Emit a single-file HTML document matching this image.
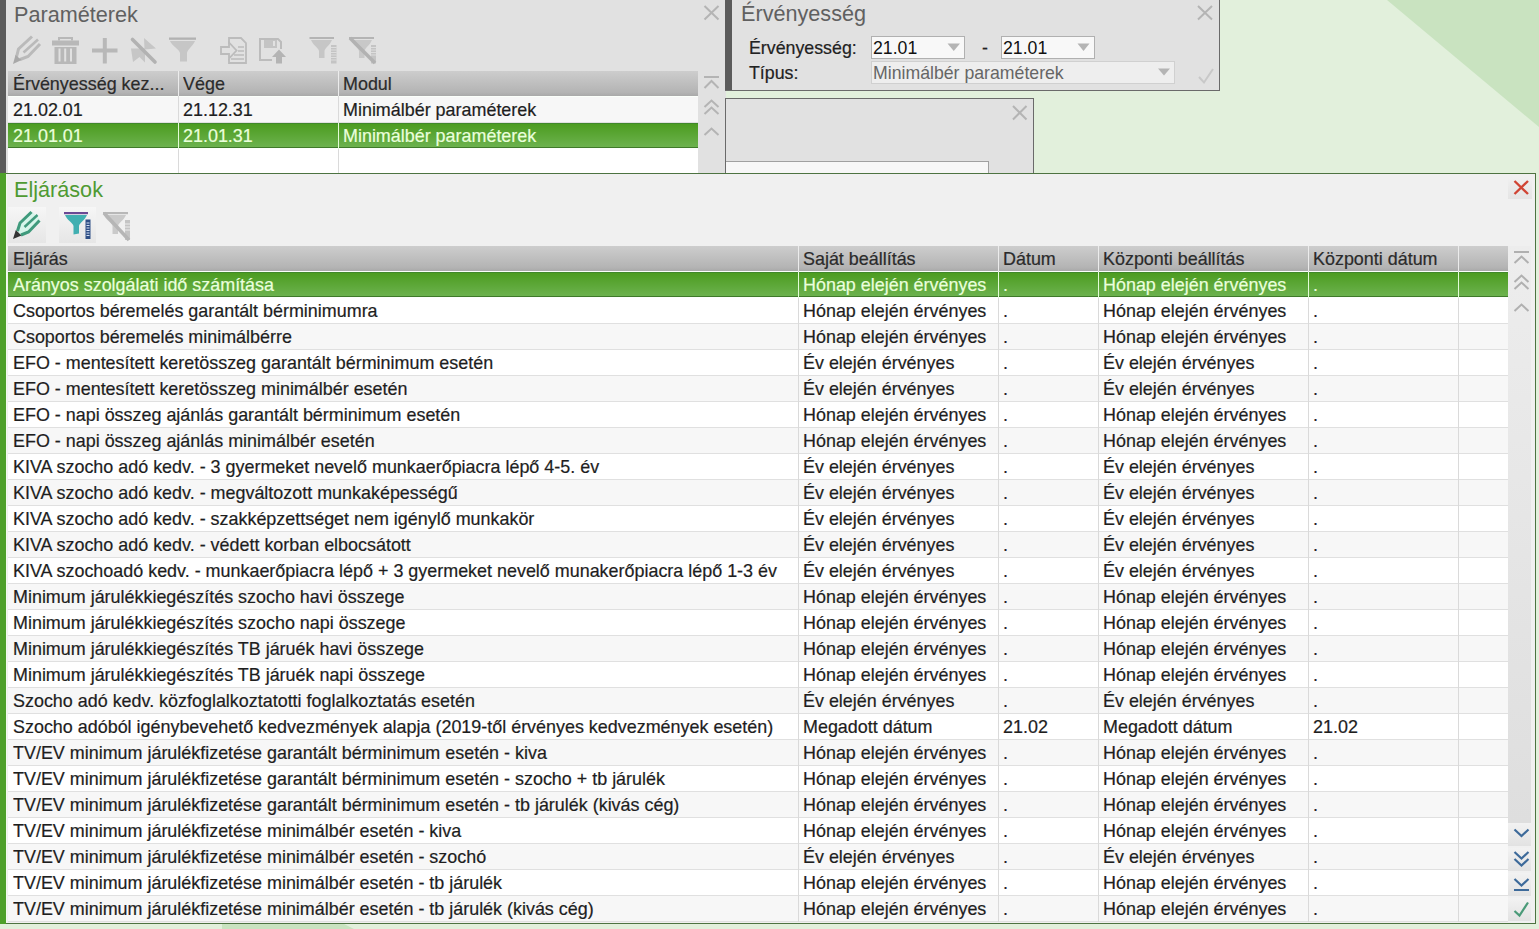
<!DOCTYPE html>
<html><head><meta charset="utf-8">
<style>
*{box-sizing:border-box;margin:0;padding:0}
html,body{width:1539px;height:929px;overflow:hidden}
body{background:#e2f0dc;font-family:"Liberation Sans",sans-serif;position:relative;color:#222}
.abs,.hdr,.ht,.rw,.ct,.cl,.title,.lbl,.inp{position:absolute}
.title{font-size:21px;color:#606060;white-space:nowrap;line-height:26px;transform:scale(1.03,1.07);transform-origin:0 20px}
.title.green{color:#4f9a32}
.hdr{background:linear-gradient(#cdcdcd,#b4b4b4 85%,#a9a9a9)}
.ht{font-size:17.93px;color:#2b2b2b;-webkit-text-stroke:0.2px #2b2b2b;white-space:nowrap;overflow:hidden}
.rw{border-bottom:1px solid #e0e0e0}
.rw.odd{background:#f7f7f7}
.rw.even{background:#ffffff}
.rw.sel{background:linear-gradient(#4c9c20,#6cb24e);border-top:1px solid #40882a;border-bottom:1px solid #3f7a2a}
.ct{font-size:17.93px;color:#1e1e1e;-webkit-text-stroke:0.2px #1e1e1e;white-space:nowrap;overflow:hidden}
.ct.st{color:#eaffdc;-webkit-text-stroke:0.2px #eaffdc}
.cl{width:1px;background:#dadada}
.lbl{font-size:17.8px;color:#222;-webkit-text-stroke:0.2px #222;white-space:nowrap;line-height:24px}
.inp{font-size:17.7px;color:#111;background:#f8f8f8;border:1px solid #b0b0b0;padding-left:1px;line-height:23px;white-space:nowrap}
.inp.sel2{background:#eeeeee;color:#666;border-color:#d0d0d0}

</style></head>
<body>
<svg class="abs" style="left:0;top:0" width="1539" height="929"><polygon points="1387,0 1539,0 1539,127" fill="#c9e3c0"/><polygon points="222,923 342,923 354,929 222,929" fill="#c9e3c0"/></svg>

<!-- top panel -->
<div class="abs" style="left:0;top:0;width:726px;height:173px;background:#e1e1e1"></div>
<div class="abs" style="left:0;top:0;width:6px;height:173px;background:#5b5b5b"></div>
<div class="title" style="left:14px;top:2px">Paraméterek</div>
<div class="hdr" style="left:8px;top:71px;width:690px;height:25px"></div>
<div class="ht" style="left:13px;top:72px;width:165px;height:25px;line-height:25px">Érvényesség kez...</div>
<div class="ht" style="left:183px;top:72px;width:155px;height:25px;line-height:25px">Vége</div>
<div class="ht" style="left:343px;top:72px;width:355px;height:25px;line-height:25px">Modul</div>
<div class="abs" style="left:8px;top:96px;width:690px;height:79px;background:#fbfffa"></div>
<div class="rw odd" style="left:8px;top:97px;width:690px;height:26px"></div>
<div class="ct " style="left:13px;top:97px;width:165px;height:26px;line-height:26px">21.02.01</div>
<div class="ct " style="left:183px;top:97px;width:155px;height:26px;line-height:26px">21.12.31</div>
<div class="ct " style="left:343px;top:97px;width:355px;height:26px;line-height:26px">Minimálbér paraméterek</div>
<div class="rw sel" style="left:8px;top:123px;width:690px;height:25px"></div>
<div class="ct st" style="left:13px;top:123px;width:165px;height:26px;line-height:26px">21.01.01</div>
<div class="ct st" style="left:183px;top:123px;width:155px;height:26px;line-height:26px">21.01.31</div>
<div class="ct st" style="left:343px;top:123px;width:355px;height:26px;line-height:26px">Minimálbér paraméterek</div>
<div class="rw even" style="left:8px;top:149px;width:690px;height:26px"></div>
<div class="cl" style="left:178px;top:71px;height:104px"></div>
<div class="abs" style="left:178px;top:71px;width:1px;height:25px;background:#ececec"></div>
<div class="abs" style="left:178px;top:123px;width:1px;height:26px;background:#e4fcd8"></div>
<div class="cl" style="left:338px;top:71px;height:104px"></div>
<div class="abs" style="left:338px;top:71px;width:1px;height:25px;background:#ececec"></div>
<div class="abs" style="left:338px;top:123px;width:1px;height:26px;background:#e4fcd8"></div>

<!-- validity panel -->
<div class="abs" style="left:725px;top:0;width:495px;height:91px;background:#e1e1e1;border-right:1px solid #6a6a6a;border-bottom:1px solid #6a6a6a"></div>
<div class="abs" style="left:725px;top:0;width:7px;height:90px;background:#5b5b5b"></div>
<div class="title" style="left:741px;top:1px">Érvényesség</div>
<div class="lbl" style="left:749px;top:36px">Érvényesség:</div>
<div class="lbl" style="left:749px;top:61px">Típus:</div>
<div class="inp" style="left:871px;top:36px;width:94px;height:23px">21.01</div>
<div class="lbl" style="left:982px;top:36px">-</div>
<div class="inp" style="left:1001px;top:36px;width:94px;height:23px">21.01</div>
<div class="inp sel2" style="left:871px;top:61px;width:304px;height:23px">Minimálbér paraméterek</div>

<!-- small panel -->
<div class="abs" style="left:725px;top:98px;width:309px;height:76px;background:#e1e1e1;border:1px solid #6a6a6a;border-bottom:none"></div>
<div class="abs" style="left:726px;top:161px;width:263px;height:12px;background:#f7f7f7;border-top:1px solid #a0a0a0;border-right:1px solid #a0a0a0"></div>

<!-- bottom panel -->
<div class="abs" style="left:0;top:173px;width:1536px;height:751px;background:#f0f0f0;border:1px solid #4d7341;border-left:none"></div><div class="abs" style="left:6px;top:174px;width:1px;height:749px;background:#f2fbee"></div>
<div class="abs" style="left:0;top:173px;width:6px;height:751px;background:#4ea02a"></div>
<div class="title green" style="left:14px;top:177px">Eljárások</div>
<div class="abs" style="left:1508px;top:246px;width:23px;height:577px;background:linear-gradient(#ededed,#dedede)"></div>
<div class="hdr" style="left:8px;top:246px;width:1500px;height:25px"></div>
<div class="ht" style="left:13px;top:247px;width:785px;height:25px;line-height:25px">Eljárás</div>
<div class="ht" style="left:803px;top:247px;width:195px;height:25px;line-height:25px">Saját beállítás</div>
<div class="ht" style="left:1003px;top:247px;width:95px;height:25px;line-height:25px">Dátum</div>
<div class="ht" style="left:1103px;top:247px;width:205px;height:25px;line-height:25px">Központi beállítás</div>
<div class="ht" style="left:1313px;top:247px;width:145px;height:25px;line-height:25px">Központi dátum</div>
<div class="ht" style="left:1463px;top:247px;width:45px;height:25px;line-height:25px"></div>
<div class="abs" style="left:8px;top:271px;width:1500px;height:651px;background:#fbfffa"></div>
<div class="rw sel" style="left:8px;top:272px;width:1500px;height:25px"></div>
<div class="ct st" style="left:13px;top:272px;width:785px;height:26px;line-height:26px">Arányos szolgálati idő számítása</div>
<div class="ct st" style="left:803px;top:272px;width:195px;height:26px;line-height:26px">Hónap elején érvényes</div>
<div class="ct st" style="left:1003px;top:272px;width:95px;height:26px;line-height:26px">.</div>
<div class="ct st" style="left:1103px;top:272px;width:205px;height:26px;line-height:26px">Hónap elején érvényes</div>
<div class="ct st" style="left:1313px;top:272px;width:145px;height:26px;line-height:26px">.</div>
<div class="ct st" style="left:1463px;top:272px;width:45px;height:26px;line-height:26px"></div>
<div class="rw even" style="left:8px;top:298px;width:1500px;height:26px"></div>
<div class="ct " style="left:13px;top:298px;width:785px;height:26px;line-height:26px">Csoportos béremelés garantált bérminimumra</div>
<div class="ct " style="left:803px;top:298px;width:195px;height:26px;line-height:26px">Hónap elején érvényes</div>
<div class="ct " style="left:1003px;top:298px;width:95px;height:26px;line-height:26px">.</div>
<div class="ct " style="left:1103px;top:298px;width:205px;height:26px;line-height:26px">Hónap elején érvényes</div>
<div class="ct " style="left:1313px;top:298px;width:145px;height:26px;line-height:26px">.</div>
<div class="ct " style="left:1463px;top:298px;width:45px;height:26px;line-height:26px"></div>
<div class="rw odd" style="left:8px;top:324px;width:1500px;height:26px"></div>
<div class="ct " style="left:13px;top:324px;width:785px;height:26px;line-height:26px">Csoportos béremelés minimálbérre</div>
<div class="ct " style="left:803px;top:324px;width:195px;height:26px;line-height:26px">Hónap elején érvényes</div>
<div class="ct " style="left:1003px;top:324px;width:95px;height:26px;line-height:26px">.</div>
<div class="ct " style="left:1103px;top:324px;width:205px;height:26px;line-height:26px">Hónap elején érvényes</div>
<div class="ct " style="left:1313px;top:324px;width:145px;height:26px;line-height:26px">.</div>
<div class="ct " style="left:1463px;top:324px;width:45px;height:26px;line-height:26px"></div>
<div class="rw even" style="left:8px;top:350px;width:1500px;height:26px"></div>
<div class="ct " style="left:13px;top:350px;width:785px;height:26px;line-height:26px">EFO - mentesített keretösszeg garantált bérminimum esetén</div>
<div class="ct " style="left:803px;top:350px;width:195px;height:26px;line-height:26px">Év elején érvényes</div>
<div class="ct " style="left:1003px;top:350px;width:95px;height:26px;line-height:26px">.</div>
<div class="ct " style="left:1103px;top:350px;width:205px;height:26px;line-height:26px">Év elején érvényes</div>
<div class="ct " style="left:1313px;top:350px;width:145px;height:26px;line-height:26px">.</div>
<div class="ct " style="left:1463px;top:350px;width:45px;height:26px;line-height:26px"></div>
<div class="rw odd" style="left:8px;top:376px;width:1500px;height:26px"></div>
<div class="ct " style="left:13px;top:376px;width:785px;height:26px;line-height:26px">EFO - mentesített keretösszeg minimálbér esetén</div>
<div class="ct " style="left:803px;top:376px;width:195px;height:26px;line-height:26px">Év elején érvényes</div>
<div class="ct " style="left:1003px;top:376px;width:95px;height:26px;line-height:26px">.</div>
<div class="ct " style="left:1103px;top:376px;width:205px;height:26px;line-height:26px">Év elején érvényes</div>
<div class="ct " style="left:1313px;top:376px;width:145px;height:26px;line-height:26px">.</div>
<div class="ct " style="left:1463px;top:376px;width:45px;height:26px;line-height:26px"></div>
<div class="rw even" style="left:8px;top:402px;width:1500px;height:26px"></div>
<div class="ct " style="left:13px;top:402px;width:785px;height:26px;line-height:26px">EFO - napi összeg ajánlás garantált bérminimum esetén</div>
<div class="ct " style="left:803px;top:402px;width:195px;height:26px;line-height:26px">Hónap elején érvényes</div>
<div class="ct " style="left:1003px;top:402px;width:95px;height:26px;line-height:26px">.</div>
<div class="ct " style="left:1103px;top:402px;width:205px;height:26px;line-height:26px">Hónap elején érvényes</div>
<div class="ct " style="left:1313px;top:402px;width:145px;height:26px;line-height:26px">.</div>
<div class="ct " style="left:1463px;top:402px;width:45px;height:26px;line-height:26px"></div>
<div class="rw odd" style="left:8px;top:428px;width:1500px;height:26px"></div>
<div class="ct " style="left:13px;top:428px;width:785px;height:26px;line-height:26px">EFO - napi összeg ajánlás minimálbér esetén</div>
<div class="ct " style="left:803px;top:428px;width:195px;height:26px;line-height:26px">Hónap elején érvényes</div>
<div class="ct " style="left:1003px;top:428px;width:95px;height:26px;line-height:26px">.</div>
<div class="ct " style="left:1103px;top:428px;width:205px;height:26px;line-height:26px">Hónap elején érvényes</div>
<div class="ct " style="left:1313px;top:428px;width:145px;height:26px;line-height:26px">.</div>
<div class="ct " style="left:1463px;top:428px;width:45px;height:26px;line-height:26px"></div>
<div class="rw even" style="left:8px;top:454px;width:1500px;height:26px"></div>
<div class="ct " style="left:13px;top:454px;width:785px;height:26px;line-height:26px">KIVA szocho adó kedv. - 3 gyermeket nevelő munkaerőpiacra lépő 4-5. év</div>
<div class="ct " style="left:803px;top:454px;width:195px;height:26px;line-height:26px">Év elején érvényes</div>
<div class="ct " style="left:1003px;top:454px;width:95px;height:26px;line-height:26px">.</div>
<div class="ct " style="left:1103px;top:454px;width:205px;height:26px;line-height:26px">Év elején érvényes</div>
<div class="ct " style="left:1313px;top:454px;width:145px;height:26px;line-height:26px">.</div>
<div class="ct " style="left:1463px;top:454px;width:45px;height:26px;line-height:26px"></div>
<div class="rw odd" style="left:8px;top:480px;width:1500px;height:26px"></div>
<div class="ct " style="left:13px;top:480px;width:785px;height:26px;line-height:26px">KIVA szocho adó kedv. - megváltozott munkaképességű</div>
<div class="ct " style="left:803px;top:480px;width:195px;height:26px;line-height:26px">Év elején érvényes</div>
<div class="ct " style="left:1003px;top:480px;width:95px;height:26px;line-height:26px">.</div>
<div class="ct " style="left:1103px;top:480px;width:205px;height:26px;line-height:26px">Év elején érvényes</div>
<div class="ct " style="left:1313px;top:480px;width:145px;height:26px;line-height:26px">.</div>
<div class="ct " style="left:1463px;top:480px;width:45px;height:26px;line-height:26px"></div>
<div class="rw even" style="left:8px;top:506px;width:1500px;height:26px"></div>
<div class="ct " style="left:13px;top:506px;width:785px;height:26px;line-height:26px">KIVA szocho adó kedv. - szakképzettséget nem igénylő munkakör</div>
<div class="ct " style="left:803px;top:506px;width:195px;height:26px;line-height:26px">Év elején érvényes</div>
<div class="ct " style="left:1003px;top:506px;width:95px;height:26px;line-height:26px">.</div>
<div class="ct " style="left:1103px;top:506px;width:205px;height:26px;line-height:26px">Év elején érvényes</div>
<div class="ct " style="left:1313px;top:506px;width:145px;height:26px;line-height:26px">.</div>
<div class="ct " style="left:1463px;top:506px;width:45px;height:26px;line-height:26px"></div>
<div class="rw odd" style="left:8px;top:532px;width:1500px;height:26px"></div>
<div class="ct " style="left:13px;top:532px;width:785px;height:26px;line-height:26px">KIVA szocho adó kedv. - védett korban elbocsátott</div>
<div class="ct " style="left:803px;top:532px;width:195px;height:26px;line-height:26px">Év elején érvényes</div>
<div class="ct " style="left:1003px;top:532px;width:95px;height:26px;line-height:26px">.</div>
<div class="ct " style="left:1103px;top:532px;width:205px;height:26px;line-height:26px">Év elején érvényes</div>
<div class="ct " style="left:1313px;top:532px;width:145px;height:26px;line-height:26px">.</div>
<div class="ct " style="left:1463px;top:532px;width:45px;height:26px;line-height:26px"></div>
<div class="rw even" style="left:8px;top:558px;width:1500px;height:26px"></div>
<div class="ct " style="left:13px;top:558px;width:785px;height:26px;line-height:26px">KIVA szochoadó kedv. - munkaerőpiacra lépő + 3 gyermeket nevelő munakerőpiacra lépő 1-3 év</div>
<div class="ct " style="left:803px;top:558px;width:195px;height:26px;line-height:26px">Év elején érvényes</div>
<div class="ct " style="left:1003px;top:558px;width:95px;height:26px;line-height:26px">.</div>
<div class="ct " style="left:1103px;top:558px;width:205px;height:26px;line-height:26px">Év elején érvényes</div>
<div class="ct " style="left:1313px;top:558px;width:145px;height:26px;line-height:26px">.</div>
<div class="ct " style="left:1463px;top:558px;width:45px;height:26px;line-height:26px"></div>
<div class="rw odd" style="left:8px;top:584px;width:1500px;height:26px"></div>
<div class="ct " style="left:13px;top:584px;width:785px;height:26px;line-height:26px">Minimum járulékkiegészítés szocho havi összege</div>
<div class="ct " style="left:803px;top:584px;width:195px;height:26px;line-height:26px">Hónap elején érvényes</div>
<div class="ct " style="left:1003px;top:584px;width:95px;height:26px;line-height:26px">.</div>
<div class="ct " style="left:1103px;top:584px;width:205px;height:26px;line-height:26px">Hónap elején érvényes</div>
<div class="ct " style="left:1313px;top:584px;width:145px;height:26px;line-height:26px">.</div>
<div class="ct " style="left:1463px;top:584px;width:45px;height:26px;line-height:26px"></div>
<div class="rw even" style="left:8px;top:610px;width:1500px;height:26px"></div>
<div class="ct " style="left:13px;top:610px;width:785px;height:26px;line-height:26px">Minimum járulékkiegészítés szocho napi összege</div>
<div class="ct " style="left:803px;top:610px;width:195px;height:26px;line-height:26px">Hónap elején érvényes</div>
<div class="ct " style="left:1003px;top:610px;width:95px;height:26px;line-height:26px">.</div>
<div class="ct " style="left:1103px;top:610px;width:205px;height:26px;line-height:26px">Hónap elején érvényes</div>
<div class="ct " style="left:1313px;top:610px;width:145px;height:26px;line-height:26px">.</div>
<div class="ct " style="left:1463px;top:610px;width:45px;height:26px;line-height:26px"></div>
<div class="rw odd" style="left:8px;top:636px;width:1500px;height:26px"></div>
<div class="ct " style="left:13px;top:636px;width:785px;height:26px;line-height:26px">Minimum járulékkiegészítés TB járuék havi összege</div>
<div class="ct " style="left:803px;top:636px;width:195px;height:26px;line-height:26px">Hónap elején érvényes</div>
<div class="ct " style="left:1003px;top:636px;width:95px;height:26px;line-height:26px">.</div>
<div class="ct " style="left:1103px;top:636px;width:205px;height:26px;line-height:26px">Hónap elején érvényes</div>
<div class="ct " style="left:1313px;top:636px;width:145px;height:26px;line-height:26px">.</div>
<div class="ct " style="left:1463px;top:636px;width:45px;height:26px;line-height:26px"></div>
<div class="rw even" style="left:8px;top:662px;width:1500px;height:26px"></div>
<div class="ct " style="left:13px;top:662px;width:785px;height:26px;line-height:26px">Minimum járulékkiegészítés TB járuék napi összege</div>
<div class="ct " style="left:803px;top:662px;width:195px;height:26px;line-height:26px">Hónap elején érvényes</div>
<div class="ct " style="left:1003px;top:662px;width:95px;height:26px;line-height:26px">.</div>
<div class="ct " style="left:1103px;top:662px;width:205px;height:26px;line-height:26px">Hónap elején érvényes</div>
<div class="ct " style="left:1313px;top:662px;width:145px;height:26px;line-height:26px">.</div>
<div class="ct " style="left:1463px;top:662px;width:45px;height:26px;line-height:26px"></div>
<div class="rw odd" style="left:8px;top:688px;width:1500px;height:26px"></div>
<div class="ct " style="left:13px;top:688px;width:785px;height:26px;line-height:26px">Szocho adó kedv. közfoglalkoztatotti foglalkoztatás esetén</div>
<div class="ct " style="left:803px;top:688px;width:195px;height:26px;line-height:26px">Év elején érvényes</div>
<div class="ct " style="left:1003px;top:688px;width:95px;height:26px;line-height:26px">.</div>
<div class="ct " style="left:1103px;top:688px;width:205px;height:26px;line-height:26px">Év elején érvényes</div>
<div class="ct " style="left:1313px;top:688px;width:145px;height:26px;line-height:26px">.</div>
<div class="ct " style="left:1463px;top:688px;width:45px;height:26px;line-height:26px"></div>
<div class="rw even" style="left:8px;top:714px;width:1500px;height:26px"></div>
<div class="ct " style="left:13px;top:714px;width:785px;height:26px;line-height:26px">Szocho adóból igénybevehető kedvezmények alapja (2019-től érvényes kedvezmények esetén)</div>
<div class="ct " style="left:803px;top:714px;width:195px;height:26px;line-height:26px">Megadott dátum</div>
<div class="ct " style="left:1003px;top:714px;width:95px;height:26px;line-height:26px">21.02</div>
<div class="ct " style="left:1103px;top:714px;width:205px;height:26px;line-height:26px">Megadott dátum</div>
<div class="ct " style="left:1313px;top:714px;width:145px;height:26px;line-height:26px">21.02</div>
<div class="ct " style="left:1463px;top:714px;width:45px;height:26px;line-height:26px"></div>
<div class="rw odd" style="left:8px;top:740px;width:1500px;height:26px"></div>
<div class="ct " style="left:13px;top:740px;width:785px;height:26px;line-height:26px">TV/EV minimum járulékfizetése garantált bérminimum esetén - kiva</div>
<div class="ct " style="left:803px;top:740px;width:195px;height:26px;line-height:26px">Hónap elején érvényes</div>
<div class="ct " style="left:1003px;top:740px;width:95px;height:26px;line-height:26px">.</div>
<div class="ct " style="left:1103px;top:740px;width:205px;height:26px;line-height:26px">Hónap elején érvényes</div>
<div class="ct " style="left:1313px;top:740px;width:145px;height:26px;line-height:26px">.</div>
<div class="ct " style="left:1463px;top:740px;width:45px;height:26px;line-height:26px"></div>
<div class="rw even" style="left:8px;top:766px;width:1500px;height:26px"></div>
<div class="ct " style="left:13px;top:766px;width:785px;height:26px;line-height:26px">TV/EV minimum járulékfizetése garantált bérminimum esetén - szocho + tb járulék</div>
<div class="ct " style="left:803px;top:766px;width:195px;height:26px;line-height:26px">Hónap elején érvényes</div>
<div class="ct " style="left:1003px;top:766px;width:95px;height:26px;line-height:26px">.</div>
<div class="ct " style="left:1103px;top:766px;width:205px;height:26px;line-height:26px">Hónap elején érvényes</div>
<div class="ct " style="left:1313px;top:766px;width:145px;height:26px;line-height:26px">.</div>
<div class="ct " style="left:1463px;top:766px;width:45px;height:26px;line-height:26px"></div>
<div class="rw odd" style="left:8px;top:792px;width:1500px;height:26px"></div>
<div class="ct " style="left:13px;top:792px;width:785px;height:26px;line-height:26px">TV/EV minimum járulékfizetése garantált bérminimum esetén - tb járulék (kivás cég)</div>
<div class="ct " style="left:803px;top:792px;width:195px;height:26px;line-height:26px">Hónap elején érvényes</div>
<div class="ct " style="left:1003px;top:792px;width:95px;height:26px;line-height:26px">.</div>
<div class="ct " style="left:1103px;top:792px;width:205px;height:26px;line-height:26px">Hónap elején érvényes</div>
<div class="ct " style="left:1313px;top:792px;width:145px;height:26px;line-height:26px">.</div>
<div class="ct " style="left:1463px;top:792px;width:45px;height:26px;line-height:26px"></div>
<div class="rw even" style="left:8px;top:818px;width:1500px;height:26px"></div>
<div class="ct " style="left:13px;top:818px;width:785px;height:26px;line-height:26px">TV/EV minimum járulékfizetése minimálbér esetén - kiva</div>
<div class="ct " style="left:803px;top:818px;width:195px;height:26px;line-height:26px">Hónap elején érvényes</div>
<div class="ct " style="left:1003px;top:818px;width:95px;height:26px;line-height:26px">.</div>
<div class="ct " style="left:1103px;top:818px;width:205px;height:26px;line-height:26px">Hónap elején érvényes</div>
<div class="ct " style="left:1313px;top:818px;width:145px;height:26px;line-height:26px">.</div>
<div class="ct " style="left:1463px;top:818px;width:45px;height:26px;line-height:26px"></div>
<div class="rw odd" style="left:8px;top:844px;width:1500px;height:26px"></div>
<div class="ct " style="left:13px;top:844px;width:785px;height:26px;line-height:26px">TV/EV minimum járulékfizetése minimálbér esetén - szochó</div>
<div class="ct " style="left:803px;top:844px;width:195px;height:26px;line-height:26px">Év elején érvényes</div>
<div class="ct " style="left:1003px;top:844px;width:95px;height:26px;line-height:26px">.</div>
<div class="ct " style="left:1103px;top:844px;width:205px;height:26px;line-height:26px">Év elején érvényes</div>
<div class="ct " style="left:1313px;top:844px;width:145px;height:26px;line-height:26px">.</div>
<div class="ct " style="left:1463px;top:844px;width:45px;height:26px;line-height:26px"></div>
<div class="rw even" style="left:8px;top:870px;width:1500px;height:26px"></div>
<div class="ct " style="left:13px;top:870px;width:785px;height:26px;line-height:26px">TV/EV minimum járulékfizetése minimálbér esetén - tb járulék</div>
<div class="ct " style="left:803px;top:870px;width:195px;height:26px;line-height:26px">Hónap elején érvényes</div>
<div class="ct " style="left:1003px;top:870px;width:95px;height:26px;line-height:26px">.</div>
<div class="ct " style="left:1103px;top:870px;width:205px;height:26px;line-height:26px">Hónap elején érvényes</div>
<div class="ct " style="left:1313px;top:870px;width:145px;height:26px;line-height:26px">.</div>
<div class="ct " style="left:1463px;top:870px;width:45px;height:26px;line-height:26px"></div>
<div class="rw odd" style="left:8px;top:896px;width:1500px;height:26px"></div>
<div class="ct " style="left:13px;top:896px;width:785px;height:26px;line-height:26px">TV/EV minimum járulékfizetése minimálbér esetén - tb járulék (kivás cég)</div>
<div class="ct " style="left:803px;top:896px;width:195px;height:26px;line-height:26px">Hónap elején érvényes</div>
<div class="ct " style="left:1003px;top:896px;width:95px;height:26px;line-height:26px">.</div>
<div class="ct " style="left:1103px;top:896px;width:205px;height:26px;line-height:26px">Hónap elején érvényes</div>
<div class="ct " style="left:1313px;top:896px;width:145px;height:26px;line-height:26px">.</div>
<div class="ct " style="left:1463px;top:896px;width:45px;height:26px;line-height:26px"></div>
<div class="cl" style="left:798px;top:246px;height:676px"></div>
<div class="abs" style="left:798px;top:246px;width:1px;height:25px;background:#ececec"></div>
<div class="abs" style="left:798px;top:272px;width:1px;height:26px;background:#e4fcd8"></div>
<div class="cl" style="left:998px;top:246px;height:676px"></div>
<div class="abs" style="left:998px;top:246px;width:1px;height:25px;background:#ececec"></div>
<div class="abs" style="left:998px;top:272px;width:1px;height:26px;background:#e4fcd8"></div>
<div class="cl" style="left:1098px;top:246px;height:676px"></div>
<div class="abs" style="left:1098px;top:246px;width:1px;height:25px;background:#ececec"></div>
<div class="abs" style="left:1098px;top:272px;width:1px;height:26px;background:#e4fcd8"></div>
<div class="cl" style="left:1308px;top:246px;height:676px"></div>
<div class="abs" style="left:1308px;top:246px;width:1px;height:25px;background:#ececec"></div>
<div class="abs" style="left:1308px;top:272px;width:1px;height:26px;background:#e4fcd8"></div>
<div class="cl" style="left:1458px;top:246px;height:676px"></div>
<div class="abs" style="left:1458px;top:246px;width:1px;height:25px;background:#ececec"></div>
<div class="abs" style="left:1458px;top:272px;width:1px;height:26px;background:#e4fcd8"></div>

<!-- top toolbar (disabled gray icons) -->
<svg class="abs" style="left:0;top:30px" width="400" height="40" viewBox="0 30 400 40">
 <g fill="none" stroke="#bababa" stroke-width="3" stroke-linecap="butt">
  <!-- pencil -->
  <path d="M16.5 57 L18.5 49 L32 36.5" stroke-width="3"/>
  <path d="M23.5 52.5 L38 39.5" stroke-width="2.6"/>
  <path d="M20 59.5 L28 56.5 L40 44" stroke-width="3"/>
 </g>
 <polygon points="13,64 15.5,55 21.5,60" fill="#a8a8a8"/>
 <!-- trash -->
 <g fill="#b8b8b8">
  <path d="M58 37 h15 v3.5 h-2 v-1.5 h-11 v1.5 h-2 z"/>
  <rect x="52" y="40.5" width="27" height="5"/>
  <path d="M54.5 47 h22 v17 h-22 z M58.5 48.5 v13 h2 v-13 z M64.2 48.5 v13 h2 v-13 z M70 48.5 v13 h2 v-13 z" fill-rule="evenodd"/>
 </g>
 <!-- plus -->
 <g fill="#b8b8b8">
  <rect x="92" y="48.5" width="25.5" height="4"/>
  <rect x="102.8" y="38" width="4" height="25.5"/>
 </g>
 <!-- crossed -->
 <polygon points="144,38 156,48.5 144.5,49.5" fill="#c6c6c6"/>
 <polygon points="131,48.5 145,48.5 145,62.5 139.5,57 133,62" fill="#c6c6c6"/>
 <path d="M132.5 39.5 L155 62" stroke="#b2b2b2" stroke-width="3.6" stroke-linecap="round"/>
 <!-- filter -->
 <rect x="169" y="37.5" width="27" height="2.3" fill="#b2b2b2"/>
 <path d="M170 41 H195 C193 46 187.5 49.5 187 53 V61.5 H180 V53 C179.5 49.5 172 46 170 41 Z" fill="#c6c6c6"/>
 <!-- import doc -->
 <g fill="none" stroke="#bcbcbc" stroke-width="1.8">
  <path d="M229 44 v-6 h12 l5 5 v20 h-17 v-4"/>
  <path d="M221 47 h8 v-4.5 l7.5 8 l-7.5 8 v-4.5 h-8 z"/>
  <path d="M238 47 h6 M238 51 h6 M234 55 h10 M231 59 h13" stroke-width="1.3"/>
 </g>
 <!-- save up -->
 <g fill="none" stroke="#bcbcbc" stroke-width="2">
  <path d="M272 60 h-12 v-21 h18 l3 3 v7"/>
 </g>
 <path d="M264 40 h13 v8 h-13 z M273 41 v5 h2 v-5 z" fill="#c4c4c4" fill-rule="evenodd"/>
 <polygon points="279,49.5 286,57 282,57 282,63.5 276,63.5 276,57 272,57" fill="#b4b4b4"/>
 <!-- filter + bar -->
 <rect x="309.5" y="37" width="24.5" height="2" fill="#b4b4b4"/>
 <path d="M311 40 H332 C330 45 325 48 324.5 51 V58 H319 V51 C318.5 48 313 45 311 40 Z" fill="#c6c6c6"/>
 <rect x="331" y="45" width="5.5" height="18.5" fill="#c4c4c4"/>
 <g stroke="#e4e4e4" stroke-width="0.8"><path d="M331 47.5h5.5M331 50h5.5M331 52.5h5.5M331 55h5.5M331 57.5h5.5M331 60h5.5"/></g>
 <!-- filter crossed -->
 <rect x="349" y="37" width="25" height="2" fill="#b4b4b4"/>
 <path d="M351 40 H372 C370 45 365 48 364.5 51 V58 H359 V51 C358.5 48 353 45 351 40 Z" fill="#c8c8c8"/>
 <rect x="371" y="45" width="5" height="18.5" fill="#c4c4c4"/>
 <g stroke="#e4e4e4" stroke-width="0.8"><path d="M371 47.5h5M371 50h5M371 52.5h5M371 55h5"/></g>
 <path d="M350 38 L375 63" stroke="#b2b2b2" stroke-width="3.5"/>
</svg>

<!-- top panel close and scroll icons -->
<svg class="abs" style="left:698px;top:0" width="28" height="173">
 <g fill="none" stroke="#b4b4b4" stroke-width="2">
  <path d="M6.5 6 L20.5 19.5 M20.5 6 L6.5 19.5"/>
  <path d="M6 77 h15 M6.5 88 L13.5 81 L20.5 88"/>
  <path d="M6.5 107 L13.5 100.5 L20.5 107 M6.5 114 L13.5 107.5 L20.5 114"/>
  <path d="M6.5 135 L13.5 128.5 L20.5 135"/>
 </g>
</svg>

<!-- validity panel icons -->
<svg class="abs" style="left:940px;top:30px" width="290" height="60">
 <polygon points="7.5,13.5 20,13.5 13.75,21" fill="#b4b4b4"/>
 <polygon points="137.5,13.5 149.5,13.5 143.5,21" fill="#b4b4b4"/>
 <polygon points="218,38.5 230,38.5 224,45.5" fill="#b4b4b4"/>
 <path d="M259 47 L264 52.5 L273 39" stroke="#c8c8c8" stroke-width="2" fill="none"/>
</svg>

<svg class="abs" style="left:1190px;top:0" width="30" height="30">
 <path d="M8 6 L22 19.5 M22 6 L8 19.5" stroke="#b4b4b4" stroke-width="2" fill="none"/>
</svg>
<!-- small panel close -->
<svg class="abs" style="left:1010px;top:103px" width="20" height="20">
 <path d="M3 3 L16.5 16.5 M16.5 3 L3 16.5" stroke="#b4b4b4" stroke-width="2" fill="none"/>
</svg>

<!-- bottom panel toolbar -->
<div class="abs" style="left:8px;top:207px;width:38px;height:36px;background:linear-gradient(#f6f6f6,#e6e6e6)"></div>
<div class="abs" style="left:59px;top:207px;width:37px;height:36px;background:linear-gradient(#f6f6f6,#e6e6e6)"></div>
<svg class="abs" style="left:0;top:200px" width="140" height="46" viewBox="0 200 140 46">
 <path d="M17 231 L20 223 L32 211.5 L40 219.5 L28.5 232 L21 235 Z" fill="#d6f5ea"/>
 <g fill="none" stroke="#3f9a7c" stroke-width="3">
  <path d="M17.5 231 L20 223 L31.5 212"/>
  <path d="M24.5 227 L37.5 215" stroke-width="2.4"/>
  <path d="M21 235 L28.5 232 L39.5 220.5"/>
 </g>
 <polygon points="13,239 15.8,230 21.5,235.5" fill="#333"/>
 <rect x="64" y="212" width="24" height="2.2" fill="#6a4894"/>
 <path d="M65 215 H87 C85 220 79.5 223 79 226 V233.5 L73.5 234.5 V226 C73 223 67 220 65 215 Z" fill="#41afb1"/>
 <rect x="85.5" y="219.5" width="5" height="19.5" fill="#2f4f86"/>
 <g stroke="#e8f0ff" stroke-width="0.9"><path d="M86.5 223h3M86.5 225.5h3M86.5 228h3M86.5 230.5h3M86.5 233h3M86.5 235.5h3"/></g>
 <rect x="103" y="212" width="25" height="2.2" fill="#b8b8b8"/>
 <path d="M104 215 H126 C124 220 118.5 223 118 226 V234 H112.5 V226 C112 223 106 220 104 215 Z" fill="#cacaca"/>
 <rect x="125" y="220" width="5" height="20" fill="#c4c4c4"/>
 <g stroke="#ececec" stroke-width="1"><path d="M125 224h5M125 227h5M125 230h5"/></g>
 <path d="M104 213 L129 240" stroke="#b6b6b6" stroke-width="3.5"/>
</svg>

<!-- bottom panel close & scroll icons -->
<div class="abs" style="left:1508px;top:177px;width:24px;height:22px;background:linear-gradient(#f0f0f0,#e4e4e4)"></div>
<svg class="abs" style="left:1508px;top:173px" width="28" height="752">
 <path d="M6.5 8 L20 21 M20 8 L6.5 21" stroke="#d04434" stroke-width="2.4" fill="none"/>
 <g fill="none" stroke="#b0b0b0" stroke-width="2">
  <path d="M6 79 h15 M6.5 90 L13.5 83.5 L20.5 90"/>
  <path d="M6.5 109 L13.5 102.5 L20.5 109 M6.5 116 L13.5 109.5 L20.5 116"/>
  <path d="M6.5 138 L13.5 131.5 L20.5 138"/>
 </g>
</svg>
<div class="abs" style="left:1508px;top:823px;width:23px;height:23px;background:linear-gradient(#f2f2f2,#e2e2e2)"></div>
<div class="abs" style="left:1508px;top:848px;width:23px;height:23px;background:linear-gradient(#f2f2f2,#e2e2e2)"></div>
<div class="abs" style="left:1508px;top:873px;width:23px;height:23px;background:linear-gradient(#f2f2f2,#e2e2e2)"></div>
<div class="abs" style="left:1508px;top:898px;width:23px;height:23px;background:linear-gradient(#f2f2f2,#e2e2e2)"></div>
<svg class="abs" style="left:1508px;top:815px" width="28" height="110">
 <g fill="none" stroke="#3d6a9a" stroke-width="2.2">
  <path d="M6.5 14.5 L13.5 21 L20.5 14.5"/>
  <path d="M6.5 37 L13.5 43.5 L20.5 37 M6.5 44 L13.5 50.5 L20.5 44"/>
  <path d="M6.5 64 L13.5 70.5 L20.5 64 M6 75 h15"/>
 </g>
 <path d="M6.5 96 L11.5 100.5 L20 87.5" stroke="#4a9a78" stroke-width="2.2" fill="none"/>
</svg>

</body></html>
